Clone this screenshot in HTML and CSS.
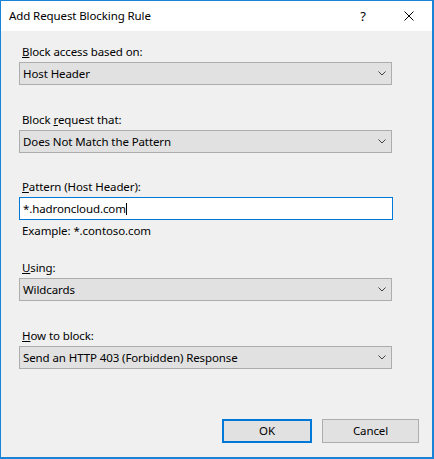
FILE: index.html
```html
<!DOCTYPE html>
<html>
<head>
<meta charset="utf-8">
<link rel="stylesheet" href="styles.css">
</head>
<body>
<div class="window">
  <div class="titlebar">
    <span class="title">Add Request Blocking Rule</span>
    <span class="capbtn help">?</span>
    <span class="capbtn close"><svg width="10" height="10" viewBox="0 0 10 10"><path d="M0.5 0.5 L9.5 9.5 M9.5 0.5 L0.5 9.5" stroke="#000" stroke-width="1" fill="none"/></svg></span>
  </div>
  <div class="content">
    <div class="field f1">
      <div class="label"><u>B</u>lock access based on:</div>
      <div class="combo"><span class="value">Host Header</span><svg class="chev" width="8" height="5" viewBox="0 0 8 5"><path d="M0.5 0.5 L4 4 L7.5 0.5" stroke="#404040" stroke-width="1" fill="none"/></svg></div>
    </div>
    <div class="field f2">
      <div class="label">Block <u>r</u>equest that:</div>
      <div class="combo"><span class="value">Does Not Match the Pattern</span><svg class="chev" width="8" height="5" viewBox="0 0 8 5"><path d="M0.5 0.5 L4 4 L7.5 0.5" stroke="#404040" stroke-width="1" fill="none"/></svg></div>
    </div>
    <div class="field f3">
      <div class="label"><u>P</u>attern (Host Header):</div>
      <div class="textbox"><span class="value">*.hadroncloud.com</span><span class="caret"></span></div>
      <div class="example">Example: *.contoso.com</div>
    </div>
    <div class="field f4">
      <div class="label"><u>U</u>sing:</div>
      <div class="combo"><span class="value">Wildcards</span><svg class="chev" width="8" height="5" viewBox="0 0 8 5"><path d="M0.5 0.5 L4 4 L7.5 0.5" stroke="#404040" stroke-width="1" fill="none"/></svg></div>
    </div>
    <div class="field f5">
      <div class="label"><u>H</u>ow to block:</div>
      <div class="combo"><span class="value">Send an HTTP 403 (Forbidden) Response</span><svg class="chev" width="8" height="5" viewBox="0 0 8 5"><path d="M0.5 0.5 L4 4 L7.5 0.5" stroke="#404040" stroke-width="1" fill="none"/></svg></div>
    </div>
    <div class="buttons">
      <div class="btn ok">OK</div>
      <div class="btn cancel">Cancel</div>
    </div>
  </div>
</div>
</body>
</html>
```
FILE: styles.css
```css
html, body {
  margin: 0;
  padding: 0;
  background: #f0f0f0;
}
body {
  font-family: "Noto Sans", "Open Sans", sans-serif;
  font-size: 11.5px;
  letter-spacing: -0.1px;
  color: #000;
}
.window {
  width: 434px;
  height: 459px;
  box-sizing: border-box;
  border-style: solid;
  border-color: #1883d7;
  border-width: 1px 2px 2px 1px;
  display: flex;
  flex-direction: column;
  background: #f0f0f0;
}
.titlebar {
  height: 30px;
  background: #fff;
  display: flex;
  align-items: center;
  flex: none;
}
.title {
  flex: 1;
  padding-left: 8px;
  line-height: 16px;
  padding-bottom: 1px;
}
.capbtn {
  width: 46px;
  height: 30px;
  display: flex;
  align-items: center;
  justify-content: center;
}
.help {
  font-size: 13px;
  padding-bottom: 1px;
  box-sizing: border-box;
}
.close svg {
  display: block;
  margin-top: -1px;
}
.content {
  flex: 1;
  display: flex;
  flex-direction: column;
  padding: 13px 0 14px 18px;
}
.field {
  display: flex;
  flex-direction: column;
  width: 373px;
}
.f2 { margin-top: 27px; }
.f3 { margin-top: 26px; }
.f4 { margin-top: 21px; }
.f5 { margin-top: 27px; }
.label {
  line-height: 16px;
  padding-left: 3px;
  margin-bottom: 2px;
}
.combo {
  height: 23px;
  box-sizing: border-box;
  border: 1px solid #adadad;
  background: #e1e1e1;
  display: flex;
  align-items: center;
  padding: 0 5px 0 3px;
}
.combo .value {
  flex: 1;
  line-height: 16px;
}
.chev {
  display: block;
  flex: none;
}
.textbox {
  width: 374px;
  height: 23px;
  box-sizing: border-box;
  border: 1px solid #0078d7;
  background: #fff;
  display: flex;
  align-items: center;
  padding: 0 3px;
}
.textbox .value {
  line-height: 16px;
}
.caret {
  display: block;
  width: 1px;
  height: 12px;
  background: #000;
}
.example {
  line-height: 16px;
  padding-left: 3px;
  margin-top: 3px;
}
.buttons {
  margin-top: auto;
  display: flex;
  justify-content: flex-end;
  gap: 10px;
  padding-right: 13px;
}
.btn {
  height: 24px;
  box-sizing: border-box;
  background: #e1e1e1;
  border: 1px solid #adadad;
  display: flex;
  align-items: center;
  justify-content: center;
  line-height: 16px;
}
.btn.ok {
  width: 90px;
  border: 2px solid #0078d7;
}
.btn.cancel {
  width: 97px;
}
```
